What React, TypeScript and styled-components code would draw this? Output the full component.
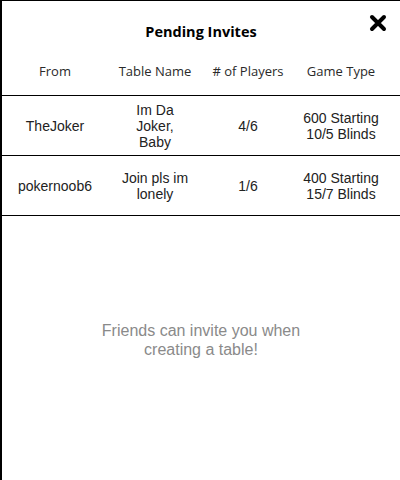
import React from "react";
import styled, { createGlobalStyle } from "styled-components";

type Invite = {
  from: string;
  table: string;
  players: string;
  game: string[];
};

const invites: Invite[] = [
  { from: "TheJoker", table: "Im Da Joker, Baby", players: "4/6", game: ["600 Starting", "10/5 Blinds"] },
  { from: "pokernoob6", table: "Join pls im lonely", players: "1/6", game: ["400 Starting", "15/7 Blinds"] },
];

const columns = ["From", "Table Name", "# of Players", "Game Type"];

const App: React.FC = () => {
  return (
    <>
      <GlobalStyle />
      <Modal>
        <TitleBar>
          <Title>Pending Invites</Title>
          <CloseButton aria-label="Close">
            <svg width="18" height="18" viewBox="0 0 18 18">
              <path
                d="M3 3 L15 15 M15 3 L3 15"
                stroke="#000"
                strokeWidth="4"
                strokeLinecap="round"
                fill="none"
              />
            </svg>
          </CloseButton>
        </TitleBar>

        <HeaderRow>
          {columns.map((c) => (
            <HeaderCell key={c}>{c}</HeaderCell>
          ))}
        </HeaderRow>

        {invites.map((inv) => (
          <Row key={inv.from}>
            <Cell>{inv.from}</Cell>
            <Cell $narrow>{inv.table}</Cell>
            <Cell>{inv.players}</Cell>
            <Cell>
              {inv.game.map((g) => (
                <div key={g}>{g}</div>
              ))}
            </Cell>
          </Row>
        ))}

        <Empty>
          <EmptyText>
            Friends can invite you when
            <br />
            creating a table!
          </EmptyText>
        </Empty>
      </Modal>
    </>
  );
};

export default App;

const GlobalStyle = createGlobalStyle`
  html, body {
    margin: 0;
    padding: 0;
    background: #fff;
  }

  body {
    font-family: "Liberation Sans", Arial, sans-serif;
  }
`;

const Modal = styled.section`
  box-sizing: border-box;
  width: 400px;
  height: 480px;
  border-top: 1px solid #000;
  border-left: 2px solid #000;
  background: #fff;
  overflow: hidden;
`;

const TitleBar = styled.header`
  position: relative;
  height: 60px;
  display: flex;
  align-items: center;
  justify-content: center;
`;

const Title = styled.h2`
  margin: 0;
  font-family: "Open Sans", sans-serif;
  font-size: 14.5px;
  font-weight: 700;
  color: #000;
`;

const CloseButton = styled.button`
  position: absolute;
  top: 12px;
  right: 12px;
  width: 20px;
  height: 20px;
  padding: 0;
  border: none;
  background: none;
  display: flex;
  align-items: center;
  justify-content: center;
  cursor: pointer;
`;

const grid = `
  display: grid;
  grid-template-columns: 106px 94px 92px 94px;
`;

const HeaderRow = styled.div`
  ${grid};
  padding: 1px 0 15px;
  border-bottom: 1px solid #000;
`;

const HeaderCell = styled.div`
  text-align: center;
  white-space: nowrap;
  font-family: "Open Sans", sans-serif;
  font-size: 13px;
  line-height: 18px;
  color: #2a2a2a;
`;

const Row = styled.div`
  ${grid};
  height: 59px;
  align-items: center;
  border-bottom: 1px solid #000;
`;

const Cell = styled.div<{ $narrow?: boolean }>`
  padding: 0 ${(p) => (p.$narrow ? "12px" : "4px")};
  text-align: center;
  font-size: 14px;
  line-height: 16px;
  color: #222;
`;

const Empty = styled.div`
  padding-top: 105px;
  display: flex;
  justify-content: center;
`;

const EmptyText = styled.p`
  margin: 0;
  text-align: center;
  font-size: 16px;
  line-height: 19px;
  color: #8a8a8a;
`;
